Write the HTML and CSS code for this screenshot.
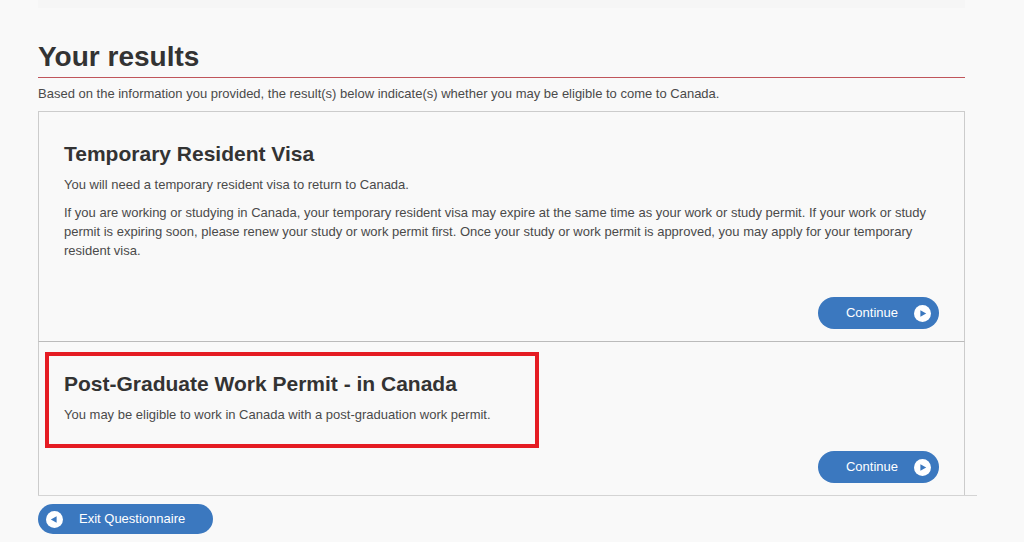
FILE: index.html
```html
<!DOCTYPE html>
<html lang="en">
  <head>
    <meta charset="UTF-8" />
    <meta name="viewport" content="width=device-width, initial-scale=1" />
    <title>Your results</title>
    <link rel="stylesheet" href="styles.css">
  </head>
  <body>
    <div class="top-strip"></div>
    <main class="page">
      <h1>Your results</h1>
      <p class="intro">Based on the information you provided, the result(s) below indicate(s) whether you may be eligible to come to Canada.</p>

      <section class="result">
        <h2>Temporary Resident Visa</h2>
        <p>You will need a temporary resident visa to return to Canada.</p>
        <p>If you are working or studying in Canada, your temporary resident visa may expire at the same time as your work or study permit. If your work or study permit is expiring soon, please renew your study or work permit first. Once your study or work permit is approved, you may apply for your temporary resident visa.</p>
        <div class="actions">
          <button type="button" class="btn btn-next">
            <span>Continue</span>
            <svg class="icon" viewBox="0 0 16 16" aria-hidden="true">
              <circle cx="8" cy="8" r="8" fill="#fff" />
              <path d="M6 5L11.5 8L6 11Z" fill="#3b78bf" />
            </svg>
          </button>
        </div>
      </section>

      <section class="result result-marked">
        <div class="highlight"></div>
        <h2>Post-Graduate Work Permit - in Canada</h2>
        <p>You may be eligible to work in Canada with a post-graduation work permit.</p>
        <div class="actions">
          <button type="button" class="btn btn-next">
            <span>Continue</span>
            <svg class="icon" viewBox="0 0 16 16" aria-hidden="true">
              <circle cx="8" cy="8" r="8" fill="#fff" />
              <path d="M6 5L11.5 8L6 11Z" fill="#3b78bf" />
            </svg>
          </button>
        </div>
      </section>

      <div class="exit">
        <button type="button" class="btn btn-exit">
          <svg class="icon" viewBox="0 0 16 16" aria-hidden="true">
            <circle cx="8" cy="8" r="8" fill="#fff" />
            <path d="M10 5L4.5 8L10 11Z" fill="#3b78bf" />
          </svg>
          <span>Exit Questionnaire</span>
        </button>
      </div>
    </main>
  </body>
</html>
```
FILE: styles.css
```css
* {
  box-sizing: border-box;
}
body {
  margin: 0;
  padding: 0 59px 0 38px;
  background: #f9f9f9;
  color: #4a4a4a;
  font-family: "Liberation Sans", Arial, sans-serif;
  font-size: 13px;
  line-height: 19px;
}
.top-strip {
  height: 8px;
  background: #f6f6f6;
}
h1 {
  margin: 0;
  padding: 31px 0 3px;
  border-bottom: 1px solid #c0555b;
  color: #333;
  font-size: 28px;
  line-height: 35px;
}
h2 {
  margin: 0 0 8px;
  color: #333;
  font-size: 21px;
  line-height: 26px;
}
p {
  margin: 0 0 9px;
}
.intro {
  margin: 6px 0 8px;
}
.result {
  padding: 29px 25px 12px;
  border: 1px solid #ccc;
}
.result-marked {
  position: relative;
  margin-top: -1px;
  border-top-color: #bbb;
  border-bottom: 0;
}
/* red box around the matching permit */
.highlight {
  position: absolute;
  top: 10px;
  left: 6px;
  width: 494px;
  height: 96px;
  border: 4px solid #e51c23;
}
.actions {
  display: flex;
  justify-content: flex-end;
  padding-top: 28px;
}
.result-marked .actions {
  padding-top: 18px;
}
.btn {
  display: flex;
  align-items: center;
  gap: 16px;
  border: 0;
  border-radius: 16px;
  background: #3b78bf;
  color: #fff;
  font-family: inherit;
  font-size: 13px;
  line-height: 16px;
  cursor: pointer;
}
.btn-next {
  height: 32px;
  padding: 0 8px 0 28px;
}
.btn-exit {
  height: 30px;
  padding: 0 28px 0 8px;
}
.icon {
  width: 17px;
  height: 17px;
}
.exit {
  margin-right: -12px;
  padding: 8px 0;
  border-top: 1px solid #d4d4d4;
}
```
